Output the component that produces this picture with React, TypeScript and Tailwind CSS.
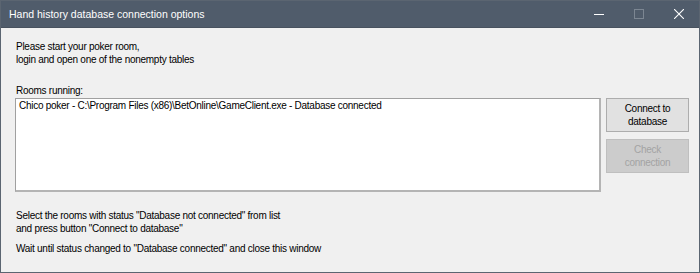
export default function App() {
  return (
    <div className="w-[700px] h-[273px] flex flex-col border border-[#5b6571] bg-[#f0f0f0] text-black font-['Liberation_Sans',Arial,sans-serif] text-[10px] tracking-[-0.27px] leading-[13px]">
      {/* title bar */}
      <div className="h-[27px] shrink-0 flex items-center bg-[#505c6b] border-b border-[#48525f] text-white">
        <span className="pl-[8px] text-[10.5px] tracking-normal">Hand history database connection options</span>
        <div className="ml-auto flex items-center h-full">
          <div className="w-[40px] h-full flex items-center justify-center">
            <div className="w-[10px] h-px bg-white" />
          </div>
          <div className="w-[40px] h-full flex items-center justify-center">
            <div className="w-[10px] h-[10px] border border-[#7c8692]" />
          </div>
          <div className="w-[40px] h-full flex items-center justify-center">
            <svg width="10" height="10" viewBox="0 0 10 10" stroke="white" strokeWidth="1.1">
              <path d="M0 0 L10 10 M10 0 L0 10" />
            </svg>
          </div>
        </div>
      </div>

      {/* body */}
      <div className="flex-1 flex flex-col pl-[14px] pr-[10px]">
        <div className="mt-[12px] ml-[1px]">
          <p>Please start your poker room,</p>
          <p>login and open one of the nonempty tables</p>
        </div>
        <p className="mt-[18px] ml-[1px]">Rooms running:</p>
        <div className="mt-px flex gap-[5px]">
          <div className="w-[586px] h-[94px] bg-white border border-[#a0a0a0] border-r-2 border-b-2 border-r-[#b4b4b4] border-b-[#b4b4b4] pl-[3px]">
            <p>Chico poker - C:\Program Files (x86)\BetOnline\GameClient.exe - Database connected</p>
          </div>
          <div className="flex flex-col gap-[7px]">
            <button className="w-[83px] h-[34px] bg-[#e1e1e1] border border-[#adadad] leading-[13px]">
              Connect to
              <br />
              database
            </button>
            <button disabled className="w-[83px] h-[34px] bg-[#cccccc] border border-[#bfbfbf] text-[#a3a3a3] leading-[13px]">
              Check
              <br />
              connection
            </button>
          </div>
        </div>
        <div className="mt-[17px] ml-[1px]">
          <p>Select the rooms with status "Database not connected" from list</p>
          <p>and press button "Connect to database"</p>
        </div>
        <p className="mt-[7px] ml-[1px]">Wait until status changed to "Database connected" and close this window</p>
      </div>
    </div>
  );
}
